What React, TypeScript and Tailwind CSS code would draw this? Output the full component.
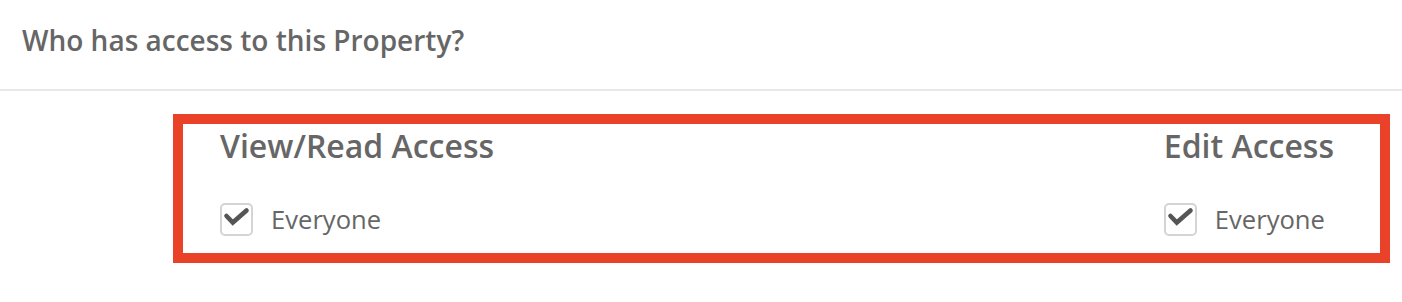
function CheckBox() {
  return (
    <span className="flex h-[33px] w-[33px] shrink-0 items-center justify-center rounded-[5px] border-2 border-[#d4d4d4] bg-white">
      <svg width="33" height="33" viewBox="0 0 33 33" className="-m-[2px]">
        <polyline
          points="6.5,13 12.8,19.5 26.5,7.5"
          fill="none"
          stroke="#555555"
          strokeWidth="4.6"
          strokeLinecap="round"
          strokeLinejoin="miter"
        />
      </svg>
    </span>
  );
}

function AccessColumn({ title }: { title: string }) {
  return (
    <div className="flex flex-col">
      <h3 className="pt-[4px] text-[32px] leading-[36px] font-semibold text-[#666666]">{title}</h3>
      <label className="mt-[39px] flex items-center gap-[18px]">
        <CheckBox />
        <span className="text-[25.6px] leading-[33px] text-[#666666]">Everyone</span>
      </label>
    </div>
  );
}

export default function App() {
  return (
    <div className="min-h-[302px] w-full bg-white font-['Open_Sans',sans-serif]">
      <div className="border-b-2 border-[#e8e8e8] pt-[21px] pb-[30px] pl-[22px]">
        <h2 className="text-[28px] leading-[38px] font-semibold text-[#666666]">
          Who has access to this Property?
        </h2>
      </div>
      <div className="pt-[23px] pr-[12px] pl-[173px]">
        <div className="flex justify-between border-[10px] border-[#ea4129] pr-[46px] pb-[17px] pl-[37px]">
          <AccessColumn title="View/Read Access" />
          <AccessColumn title="Edit Access" />
        </div>
      </div>
    </div>
  );
}
